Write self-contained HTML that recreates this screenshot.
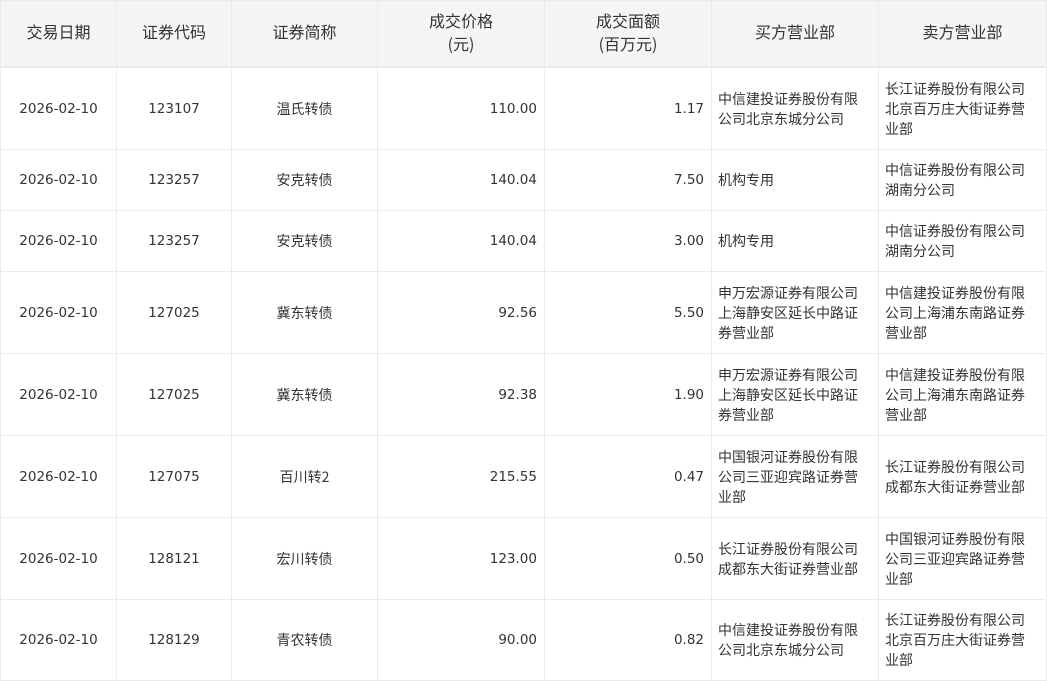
<!DOCTYPE html>
<html><head><meta charset="utf-8"><style>
body{margin:0;background:#fff;font-family:"DejaVu Sans","Noto Sans CJK SC",sans-serif;color:#333;}
table{position:absolute;left:0;top:0;border-collapse:collapse;table-layout:fixed;width:1046px;}
th,td{border:1px solid #ebebeb;padding:0 7px;font-size:13.5px;line-height:20px;}
th{background:#f5f5f5;font-weight:normal;font-family:"Noto Sans CJK SC",sans-serif;font-size:16px;line-height:23px;height:61px;padding-bottom:4px;text-align:center;border-bottom:2px solid #ebebeb}
td{text-align:center}
td.r{text-align:right;padding-right:7px}
td.l{text-align:left;padding-left:6px;padding-right:12px;font-family:"Noto Sans CJK SC",sans-serif;font-size:14px}
td.c{font-family:"Noto Sans CJK SC",sans-serif;font-size:14px}
tr.t td{height:81px}
tr.s td{height:60px}
tr.last td{height:80px}
</style></head><body>
<table>
<colgroup><col style="width:116px"><col style="width:115px"><col style="width:146px"><col style="width:167px"><col style="width:167px"><col style="width:167px"><col style="width:168px"></colgroup>
<tr><th>交易日期</th><th>证券代码</th><th>证券简称</th><th>成交价格<br>(元)</th><th>成交面额<br>(百万元)</th><th>买方营业部</th><th>卖方营业部</th></tr>
<tr class="t"><td>2026-02-10</td><td>123107</td><td class="c">温氏转债</td><td class="r">110.00</td><td class="r">1.17</td><td class="l">中信建投证券股份有限公司北京东城分公司</td><td class="l">长江证券股份有限公司北京百万庄大街证券营业部</td></tr>
<tr class="s"><td>2026-02-10</td><td>123257</td><td class="c">安克转债</td><td class="r">140.04</td><td class="r">7.50</td><td class="l">机构专用</td><td class="l">中信证券股份有限公司湖南分公司</td></tr>
<tr class="s"><td>2026-02-10</td><td>123257</td><td class="c">安克转债</td><td class="r">140.04</td><td class="r">3.00</td><td class="l">机构专用</td><td class="l">中信证券股份有限公司湖南分公司</td></tr>
<tr class="t"><td>2026-02-10</td><td>127025</td><td class="c">冀东转债</td><td class="r">92.56</td><td class="r">5.50</td><td class="l">申万宏源证券有限公司上海静安区延长中路证券营业部</td><td class="l">中信建投证券股份有限公司上海浦东南路证券营业部</td></tr>
<tr class="t"><td>2026-02-10</td><td>127025</td><td class="c">冀东转债</td><td class="r">92.38</td><td class="r">1.90</td><td class="l">申万宏源证券有限公司上海静安区延长中路证券营业部</td><td class="l">中信建投证券股份有限公司上海浦东南路证券营业部</td></tr>
<tr class="t"><td>2026-02-10</td><td>127075</td><td class="c">百川转2</td><td class="r">215.55</td><td class="r">0.47</td><td class="l">中国银河证券股份有限公司三亚迎宾路证券营业部</td><td class="l">长江证券股份有限公司成都东大街证券营业部</td></tr>
<tr class="t"><td>2026-02-10</td><td>128121</td><td class="c">宏川转债</td><td class="r">123.00</td><td class="r">0.50</td><td class="l">长江证券股份有限公司成都东大街证券营业部</td><td class="l">中国银河证券股份有限公司三亚迎宾路证券营业部</td></tr>
<tr class="t last"><td>2026-02-10</td><td>128129</td><td class="c">青农转债</td><td class="r">90.00</td><td class="r">0.82</td><td class="l">中信建投证券股份有限公司北京东城分公司</td><td class="l">长江证券股份有限公司北京百万庄大街证券营业部</td></tr>
</table>
</body></html>
